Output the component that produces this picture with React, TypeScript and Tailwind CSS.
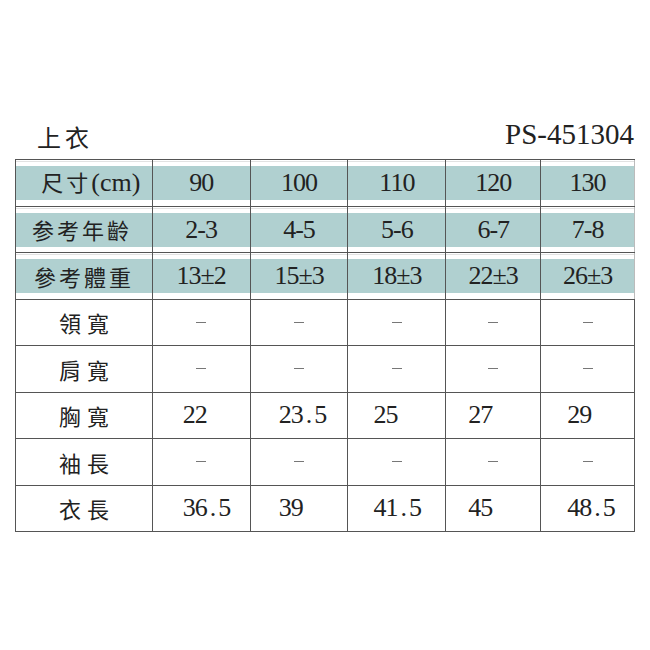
import type { ReactNode } from "react";

const colWidths = ["w-[137px]", "w-[98px]", "w-[98px]", "w-[98px]", "w-[95px]", "w-[94px]"];
const dataPad = ["pl-[30px]", "pl-[28px]", "pl-[25px]", "pl-[22px]", "pl-[26px]"];

type Row = { label: ReactNode; values: string[]; band?: boolean };

const Num = ({ children }: { children: ReactNode }) => (
  <span className="font-[Liberation_Serif] text-[26px] tracking-[-1px]">{children}</span>
);

const Label = ({ children }: { children: ReactNode }) => (
  <span className="font-[Noto_Sans_CJK_TC] text-[22px] tracking-[3px]">{children}</span>
);

const rows: Row[] = [
  {
    label: (
      <span className="pl-[14px]">
        <Label>尺寸</Label>
        <span className="font-[Liberation_Serif] text-[26px]">(cm)</span>
      </span>
    ),
    values: ["90", "100", "110", "120", "130"],
    band: true,
  },
  {
    label: (
      <span className="pr-[4px]">
        <Label>参考年齡</Label>
      </span>
    ),
    values: ["2-3", "4-5", "5-6", "6-7", "7-8"],
    band: true,
  },
  { label: <Label>參考體重</Label>, values: ["13±2", "15±3", "18±3", "22±3", "26±3"], band: true },
  { label: "領寬", values: ["-", "-", "-", "-", "-"] },
  { label: "肩寬", values: ["-", "-", "-", "-", "-"] },
  { label: "胸寬", values: ["22", "23.5", "25", "27", "29"] },
  { label: "袖長", values: ["-", "-", "-", "-", "-"] },
  { label: "衣長", values: ["36.5", "39", "41.5", "45", "48.5"] },
];

const Value = ({ v }: { v: string }) => {
  const dot = v.indexOf(".");
  if (dot < 0) return <>{v}</>;
  return (
    <>
      {v.slice(0, dot)}
      <span className="mx-[3px]">.</span>
      {v.slice(dot + 1)}
    </>
  );
};

const App = () => {
  return (
    <div className="w-[650px] h-[650px] bg-white text-[#222] px-[15px] pt-[117px]">
      <div className="flex items-end justify-between h-[32px] mb-[10px]">
        <span className="font-[Noto_Sans_CJK_TC] text-[24px] tracking-[4px] pl-[22px] leading-none">上衣</span>
        <span className="font-[Liberation_Serif] text-[29px] leading-none pr-[1px]">PS-451304</span>
      </div>

      <div className="w-[620px] border-t border-l border-[#555]">
        {rows.map((row, ri) => (
          <div key={ri} className="flex h-[46.5px] border-b border-[#555]">
            {[row.label, ...row.values].map((cell, ci) => {
              const isLabel = ci === 0;
              const content = isLabel ? (
                typeof cell === "string" ? (
                  <span className="font-[Noto_Sans_CJK_TC] text-[22px] tracking-[6px] pl-[6px]">{cell}</span>
                ) : (
                  cell
                )
              ) : cell === "-" ? (
                <span className="block w-[10px] h-[1px] bg-[#777]" />
              ) : (
                <Num>
                  <Value v={cell as string} />
                </Num>
              );
              const centered = isLabel || row.band || cell === "-";
              return (
                <div
                  key={ci}
                  className={`${colWidths[ci]} h-full border-r ${
                    ci === 5 && row.band ? "border-[#bbb]" : "border-[#555]"
                  } flex flex-col`}
                >
                  {row.band ? (
                    <>
                      <div className="h-[1px] mt-[1px] bg-[#e2e2e2]" />
                      <div className="h-[34px] mt-[4px] bg-[#b0d0d0] flex items-center justify-center leading-none">
                        {content}
                      </div>
                    </>
                  ) : (
                    <div
                      className={`flex-1 flex items-center leading-none ${
                        centered ? "justify-center" : dataPad[ci - 1]
                      }`}
                    >
                      {content}
                    </div>
                  )}
                </div>
              );
            })}
          </div>
        ))}
      </div>
    </div>
  );
};

export default App;
